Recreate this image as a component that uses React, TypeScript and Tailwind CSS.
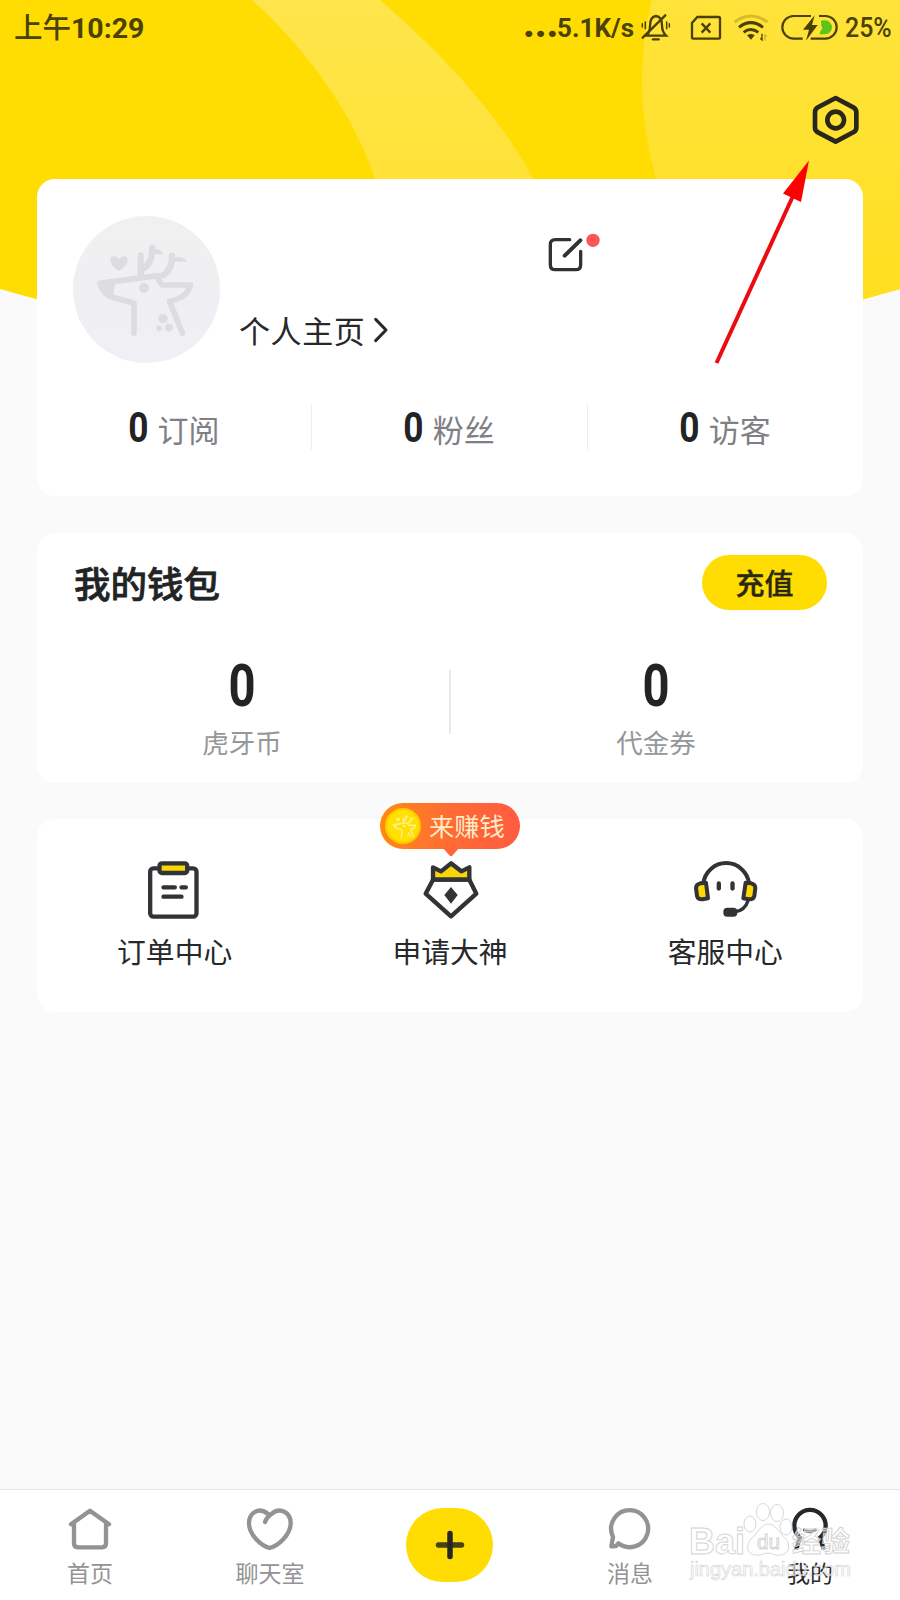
import React from "react";

const stats = [
  { count: 0, label: "订阅" },
  { count: 0, label: "粉丝" },
  { count: 0, label: "访客" },
];

const wallet = [
  { count: 0, label: "虎牙币" },
  { count: 0, label: "代金券" },
];

const HeaderBackground = () => (
  <svg className="absolute left-0 top-0" width="900" height="330" viewBox="0 0 900 330">
    <defs>
      <linearGradient id="band" x1="0" y1="0" x2="0" y2="1">
        <stop offset="0" stopColor="#FFE54C" />
        <stop offset="1" stopColor="#FFE236" />
      </linearGradient>
      <linearGradient id="disc" x1="0" y1="0" x2="0" y2="1">
        <stop offset="0" stopColor="#FFE33A" />
        <stop offset="0.5" stopColor="#FFE12E" />
        <stop offset="1" stopColor="#FFDE1A" />
      </linearGradient>
      <clipPath id="sheet">
        <path d="M0 0H900V289Q450 420 0 289Z" />
      </clipPath>
    </defs>
    <g clipPath="url(#sheet)">
      <rect width="900" height="330" fill="#FFDD03" />
      <path d="M252 0C310 52 355 118 375 179V190H540L533 179C500 115 440 52 380 0Z" fill="url(#band)" />
      <path d="M652 0Q630 85 656 179L700 330H900V0Z" fill="url(#disc)" />
    </g>
  </svg>
);

const StatusBar = () => (
  <div className="relative flex h-14 items-center pl-[14px] pr-[7px] font-['Roboto','Noto_Sans_CJK_SC',sans-serif] text-[28px] font-bold leading-none text-[#4A4102]">
    <span className="pt-[3px] text-[28.5px] font-medium">上午</span>
    <span className="pt-[2px] text-[28.5px]">10:29</span>
    <span className="mb-[7px] ml-auto flex items-baseline">
      <span className="mr-[-1px] text-[43px] leading-[28px] tracking-[-0.7px]">...</span>
      <span className="text-[26px]">5.1K/s</span>
    </span>
    <svg className="ml-[6px]" width="32" height="32" viewBox="420 36 96 96" fill="none" stroke="currentColor" strokeWidth="7" strokeLinecap="round">
      <path d="M440 107Q450 95 450 78Q450 50 468 48Q486 50 486 76Q486 95 498 107Z" />
      <path d="M428 113L496 46" />
      <path d="M436 66V86M427 71V81M500 66V86M508 71V81" strokeWidth="4.500" />
      <path d="M459 118H476" strokeWidth="7" />
    </svg>
    <svg className="ml-[18px]" width="32" height="26" viewBox="570 45 96 76" fill="none" stroke="currentColor" strokeWidth="7">
      <path d="M592 50H656Q660 50 660 54V111Q660 115 656 115H580Q576 115 576 111V68Z" />
      <path d="M605 69L631 97M631 69L605 97" />
    </svg>
    <svg className="ml-[11px]" width="36" height="30" viewBox="699 41 108 90" fill="none" stroke="currentColor" strokeWidth="9">
      <path d="M704 68Q752 32 802 68" stroke="#D3BC28" />
      <path d="M717 84Q752 56 789 84" />
      <path d="M731 99Q752 82 775 99" />
      <path d="M741 108Q752 100 764 108L753 121Z" fill="currentColor" stroke="none" />
      <path d="M786 103V122L781 117" strokeWidth="4" />
      <path d="M795 124V107L800 112" strokeWidth="4" stroke="#C9B323" />
    </svg>
    <svg className="ml-[12px]" width="57" height="28" viewBox="843 41 171 84" fill="none" stroke="currentColor" strokeWidth="6.500">
      <path d="M933 47H881A34 34 0 0 0 881 115H908M957 47H976A34 34 0 0 1 976 115H932" />
      <path d="M963 61Q968 59 975 60A21 21 0 0 1 975 102H958Q961 92 967 84Q962 72 963 61Z" fill="#5FC417" stroke="none" />
      <path d="M944 45L909 88H927L918 121L953 74H936Z" fill="currentColor" stroke="none" />
    </svg>
    <span className="mb-[1px] ml-[7px] inline-block w-[48px] origin-left scale-x-[0.89] font-medium">25%</span>
  </div>
);

const Deer = () => (
  <>
    <path d="M333 225V285M333 268Q368 256 368 202M400 285Q428 268 427 226" strokeWidth="19" />
    <path d="M366 208Q395 202 400 222H370ZM430 232Q466 226 471 244H432Z" fill="currentColor" stroke="none" />
    <path d="M210 309L385 286Q385 300 398 314H482Q474 352 420 363L458 458M210 309Q222 344 246 350L313 368V458" strokeWidth="17" />
    <path d="M203 305L262 300Q250 320 252 346L235 348Z" fill="currentColor" stroke="none" />
    <path d="M268 272C220 240 248 214 268 235C288 214 316 240 268 272Z" fill="currentColor" stroke="none" />
    <g fill="currentColor" stroke="none">
      <circle cx="343" cy="323" r="15" />
      <circle cx="400" cy="415" r="14" />
      <circle cx="388" cy="444" r="8.5" />
      <circle cx="418" cy="442" r="11.5" />
    </g>
  </>
);

const Avatar = () => (
  <div className="h-[147px] w-[147px] rounded-full bg-gradient-to-b from-[#F0F0F0] to-[#EFEFF5] text-[#DBDDE0]">
    <svg width="147" height="147" viewBox="130 107 441 441" fill="none" stroke="currentColor" strokeLinecap="round" strokeLinejoin="round">
      <Deer />
    </svg>
  </div>
);

const ProfileCard = () => (
  <section className="relative h-[317px] rounded-[18px] bg-white">
    <div className="flex h-[220px] pl-9 pt-[37px]">
      <Avatar />
      <div className="ml-[19px] mt-[96px] flex h-[34px] items-center text-[31px] leading-none tracking-[0.6px] text-[#27282A]">
        个人主页
        <svg className="ml-[8px] mt-[2px]" width="18" height="28" viewBox="1030 410 54 84" fill="none" stroke="currentColor" strokeWidth="9" strokeLinecap="round" strokeLinejoin="round">
          <path d="M1038 420L1069 452L1038 484" />
        </svg>
      </div>
      <svg className="ml-[157px] mt-[17px]" width="54" height="40" viewBox="145 280 162 120" fill="none" stroke="#303234" strokeWidth="10" strokeLinecap="round">
        <path d="M210 300H167Q152 300 152 315V375Q152 390 167 390H228Q243 390 243 375V335" />
        <path d="M195 348L242 302" strokeWidth="12" />
        <circle cx="280" cy="302" r="20" fill="#FB5758" stroke="none" />
      </svg>
    </div>
    <div className="mt-[5px] grid h-[46px] grid-cols-3 divide-x divide-[#EFEFEF]">
      {stats.map((item) => (
        <div key={item.label} className="flex items-center justify-center pr-[3px]">
          <span className="inline-block scale-x-[0.82] font-['Roboto'] text-[43px] font-bold leading-none text-[#222324]">
            {item.count}
          </span>
          <span className="ml-[7px] mt-[3px] text-[31px] leading-none text-[#7F8083]">{item.label}</span>
        </div>
      ))}
    </div>
  </section>
);

const WalletCard = () => (
  <section className="relative mt-[37px] h-[250px] rounded-[18px] bg-white">
    <div className="flex items-center justify-between pl-[37px] pr-9 pt-[22px]">
      <h2 className="pt-[2px] text-[36.5px] font-medium leading-none text-[#222324] [-webkit-text-stroke:0.7px]">我的钱包</h2>
      <button className="h-[55px] w-[125px] rounded-full bg-[#FFDD03] text-[29px] font-medium leading-none text-[#2A2812] [-webkit-text-stroke:0.4px]">
        充值
      </button>
    </div>
    <div className="relative ml-[-2px] grid grid-cols-2 pt-[46px]">
      {wallet.map((item) => (
        <div key={item.label} className="flex flex-col items-center">
          <span className="inline-block scale-x-[0.8] font-['Roboto'] text-[59px] font-bold leading-[60px] text-[#222324]">
            {item.count}
          </span>
          <span className="mt-[8px] text-[26.5px] leading-[36px] text-[#96979A]">{item.label}</span>
        </div>
      ))}
      <div className="absolute left-1/2 top-[60px] h-16 w-[2px] bg-[#E8E9EB]" />
    </div>
  </section>
);

const EarnBadge = () => (
  <div className="absolute left-1/2 top-[-16px] ml-[-70px] flex h-[46px] w-[140px] items-center rounded-full bg-gradient-to-r from-[#FF8A0A] via-[#FF6B33] to-[#FF5A41] pl-[5px]">
    <span className="flex h-9 w-9 items-center justify-center rounded-full border-2 border-[#FFCB00] bg-[#FFE000] text-[#FFF08A]">
      <svg width="25" height="25" viewBox="185 185 300 290" fill="none" stroke="currentColor" strokeLinecap="round" strokeLinejoin="round">
        <Deer />
      </svg>
    </span>
    <span className="ml-[8px] text-[25.3px] leading-none text-[#FFEBC4]">来赚钱</span>
    <svg className="absolute left-[63px] top-[45px]" width="16" height="9" viewBox="0 0 16 9">
      <path d="M0 0H16L9.500 7.500Q8 9 6.500 7.500Z" fill="#FF6738" />
    </svg>
  </div>
);

const OrderIcon = () => (
  <svg className="-translate-x-px" width="55" height="62" viewBox="140 208 164 186" fill="none" stroke="#323336" strokeWidth="13" strokeLinecap="round" strokeLinejoin="round">
    <rect x="152" y="236" width="139" height="145" rx="10" />
    <rect x="180" y="221" width="83" height="29" rx="7" fill="#F8D506" />
    <path d="M192 293H226M246 293H259M192 321H246" />
  </svg>
);

const CrownIcon = () => (
  <svg className="translate-x-px" width="58" height="62" viewBox="155 208 174 186" fill="none" stroke="#323336" strokeWidth="13" strokeLinejoin="round">
    <path d="M188 270V233L212 245L242 221L273 245L297 233V270Z" fill="#F8D506" />
    <path d="M188 270L166 312L242 380L318 312L297 270Z" />
    <path d="M242 292L262 316L242 342L222 316Z" fill="#323336" stroke="none" />
  </svg>
);

const HeadsetIcon = () => (
  <svg className="translate-x-px" width="68" height="62" viewBox="275 87 204 186" fill="none" stroke="#323336" strokeWidth="12" strokeLinecap="round" strokeLinejoin="round">
    <path d="M309 160A69 69 0 0 1 446 160" />
    <path d="M300 160L317 158L323 205L307 208Q293 209 290 198L287 174Q287 163 300 160Z" fill="#FFD900" />
    <path d="M453 160L436 158L429 205L445 208Q459 209 462 198L465 174Q465 163 453 160Z" fill="#FFD900" />
    <path d="M443 212Q434 242 402 246" strokeWidth="10" />
    <rect x="369" y="233" width="42" height="27" rx="12" fill="#323336" stroke="none" />
    <rect x="349" y="154" width="13" height="28" rx="6.500" fill="#323336" stroke="none" />
    <rect x="390" y="154" width="13" height="28" rx="6.500" fill="#323336" stroke="none" />
  </svg>
);

const services = [
  { label: "订单中心", icon: <OrderIcon /> },
  { label: "申请大神", icon: <CrownIcon /> },
  { label: "客服中心", icon: <HeadsetIcon /> },
];

const ServicesCard = () => (
  <section className="relative mt-[36px] grid h-[193px] grid-cols-3 rounded-[18px] bg-white pt-10">
    {services.map((item) => (
      <div key={item.label} className="flex flex-col items-center">
        {item.icon}
        <span className="mt-[10px] text-[28.8px] leading-[40px] text-[#27282A]">{item.label}</span>
      </div>
    ))}
    <EarnBadge />
  </section>
);

const tabs = [
  {
    label: "首页",
    active: false,
    icon: (
      <svg width="46" height="44" viewBox="201 81 138 132">
        <path d="M213 133L270 92L327 133M222 130V190Q222 202 234 202H306Q318 202 318 190V130" />
      </svg>
    ),
  },
  {
    label: "聊天室",
    active: false,
    icon: (
      <svg width="50" height="44" viewBox="735 81 150 132">
        <path d="M795 126Q800 112 813 103C840 78 873 98 872 131C871 165 835 197 809 204C783 197 748 165 747 131C746 98 777 79 804 102" />
      </svg>
    ),
  },
  { label: "", active: false, icon: null },
  {
    label: "消息",
    active: false,
    icon: (
      <svg width="46" height="44" viewBox="681 81 138 132">
        <path d="M715 190A55.500 55.500 0 1 0 696 163L699 171L694 199L708 198Z" />
      </svg>
    ),
  },
  {
    label: "我的",
    active: true,
    icon: (
      <svg width="46" height="44" viewBox="381 81 138 132">
        <path d="M410 204L420 173M490 204L480 173M420 173A47 47 0 1 1 480 173" />
        <path d="M433 150Q449 160 466 150" strokeWidth="9" />
      </svg>
    ),
  },
];

const TabBar = () => (
  <nav className="relative grid h-[111px] grid-cols-5 border-t border-[#E6E7EB] bg-white">
    {tabs.map((tab, idx) =>
      tab.icon ? (
        <div
          key={idx}
          className={`flex flex-col items-center pt-[17px] [&_svg]:fill-none [&_svg]:stroke-current [&_svg]:stroke-[13] [&_svg]:[stroke-linecap:round] [&_svg]:[stroke-linejoin:round] ${
            tab.active ? "text-[#27282A]" : "text-[#939393]"
          }`}
        >
          {tab.icon}
          <span className="mt-[5px] text-[23px] leading-[32px]">{tab.label}</span>
        </div>
      ) : (
        <div key={idx} className="flex justify-center pr-[1px] pt-[18px]">
          <button className="flex h-[74px] w-[87px] items-center justify-center rounded-full bg-[#FFDD03]">
            <svg width="30" height="30" viewBox="0 0 30 30" strokeWidth="5.500" strokeLinecap="round">
              <path d="M3.500 15H26.500" stroke="#454216" />
              <path d="M15 3.500V26.500" stroke="#262723" />
            </svg>
          </button>
        </div>
      ),
    )}
  </nav>
);

const Watermark = () => (
  <svg
    className="pointer-events-none absolute left-[685px] top-[1498px] font-['Liberation_Sans','Noto_Sans_CJK_SC',sans-serif]"
    width="175"
    height="92"
    viewBox="0 0 175 92"
    fill="#FFFFFF"
    fillOpacity="0.55"
    stroke="#D2D2D2"
    strokeWidth="0.9"
  >
    <ellipse cx="65" cy="26" rx="6" ry="8" />
    <ellipse cx="78" cy="14" rx="6.500" ry="8.500" />
    <ellipse cx="92" cy="15" rx="6.500" ry="8.500" />
    <ellipse cx="101" cy="29" rx="6" ry="8" />
    <path d="M83 26C91 26 94 35 100 40C106 46 105 56 96 57C89 58 88 55 83 55C78 55 76 58 70 57C61 56 61 46 67 40C73 35 76 26 83 26Z" />
    <text x="4" y="56" fontSize="37" fontWeight="700" textLength="56" lengthAdjust="spacingAndGlyphs">Bai</text>
    <text x="72" y="51" fontSize="20" textLength="23" lengthAdjust="spacingAndGlyphs">du</text>
    <text x="107" y="54" fontSize="28" fontWeight="700" textLength="58" lengthAdjust="spacingAndGlyphs">经验</text>
    <text x="5" y="78" fontSize="20" strokeWidth="0.6" textLength="161" lengthAdjust="spacingAndGlyphs">jingyan.baidu.com</text>
  </svg>
);

const App = () => {
  return (
    <main className="relative flex h-[1600px] w-[900px] flex-col overflow-hidden bg-[#FAFAFA] font-['Noto_Sans_CJK_SC',sans-serif]">
      <HeaderBackground />
      <StatusBar />
      <header className="relative flex h-[123px] justify-end pr-[38px] pt-[37px]">
        <svg width="54" height="54" viewBox="924 278 162 162" fill="none" stroke="#28271C" strokeWidth="14" strokeLinejoin="round">
          <path d="M1007 293L1060 321Q1069 326 1069 336V382Q1069 391 1060 396L1007 424L954 396Q945 391 945 382V336Q945 326 954 321Z" />
          <circle cx="1007" cy="359" r="25" />
        </svg>
      </header>
      <div className="grow px-[37px]">
        <ProfileCard />
        <WalletCard />
        <ServicesCard />
      </div>
      <TabBar />
      <svg className="pointer-events-none absolute left-[710px] top-[155px]" width="110" height="215" viewBox="710 155 110 215">
        <path d="M716.500 363L793 196" stroke="#EC0B10" strokeWidth="4" />
        <path d="M809 160.500L783 193.500L801 202Z" fill="#FF0000" />
      </svg>
      <Watermark />
    </main>
  );
};

export default App;
